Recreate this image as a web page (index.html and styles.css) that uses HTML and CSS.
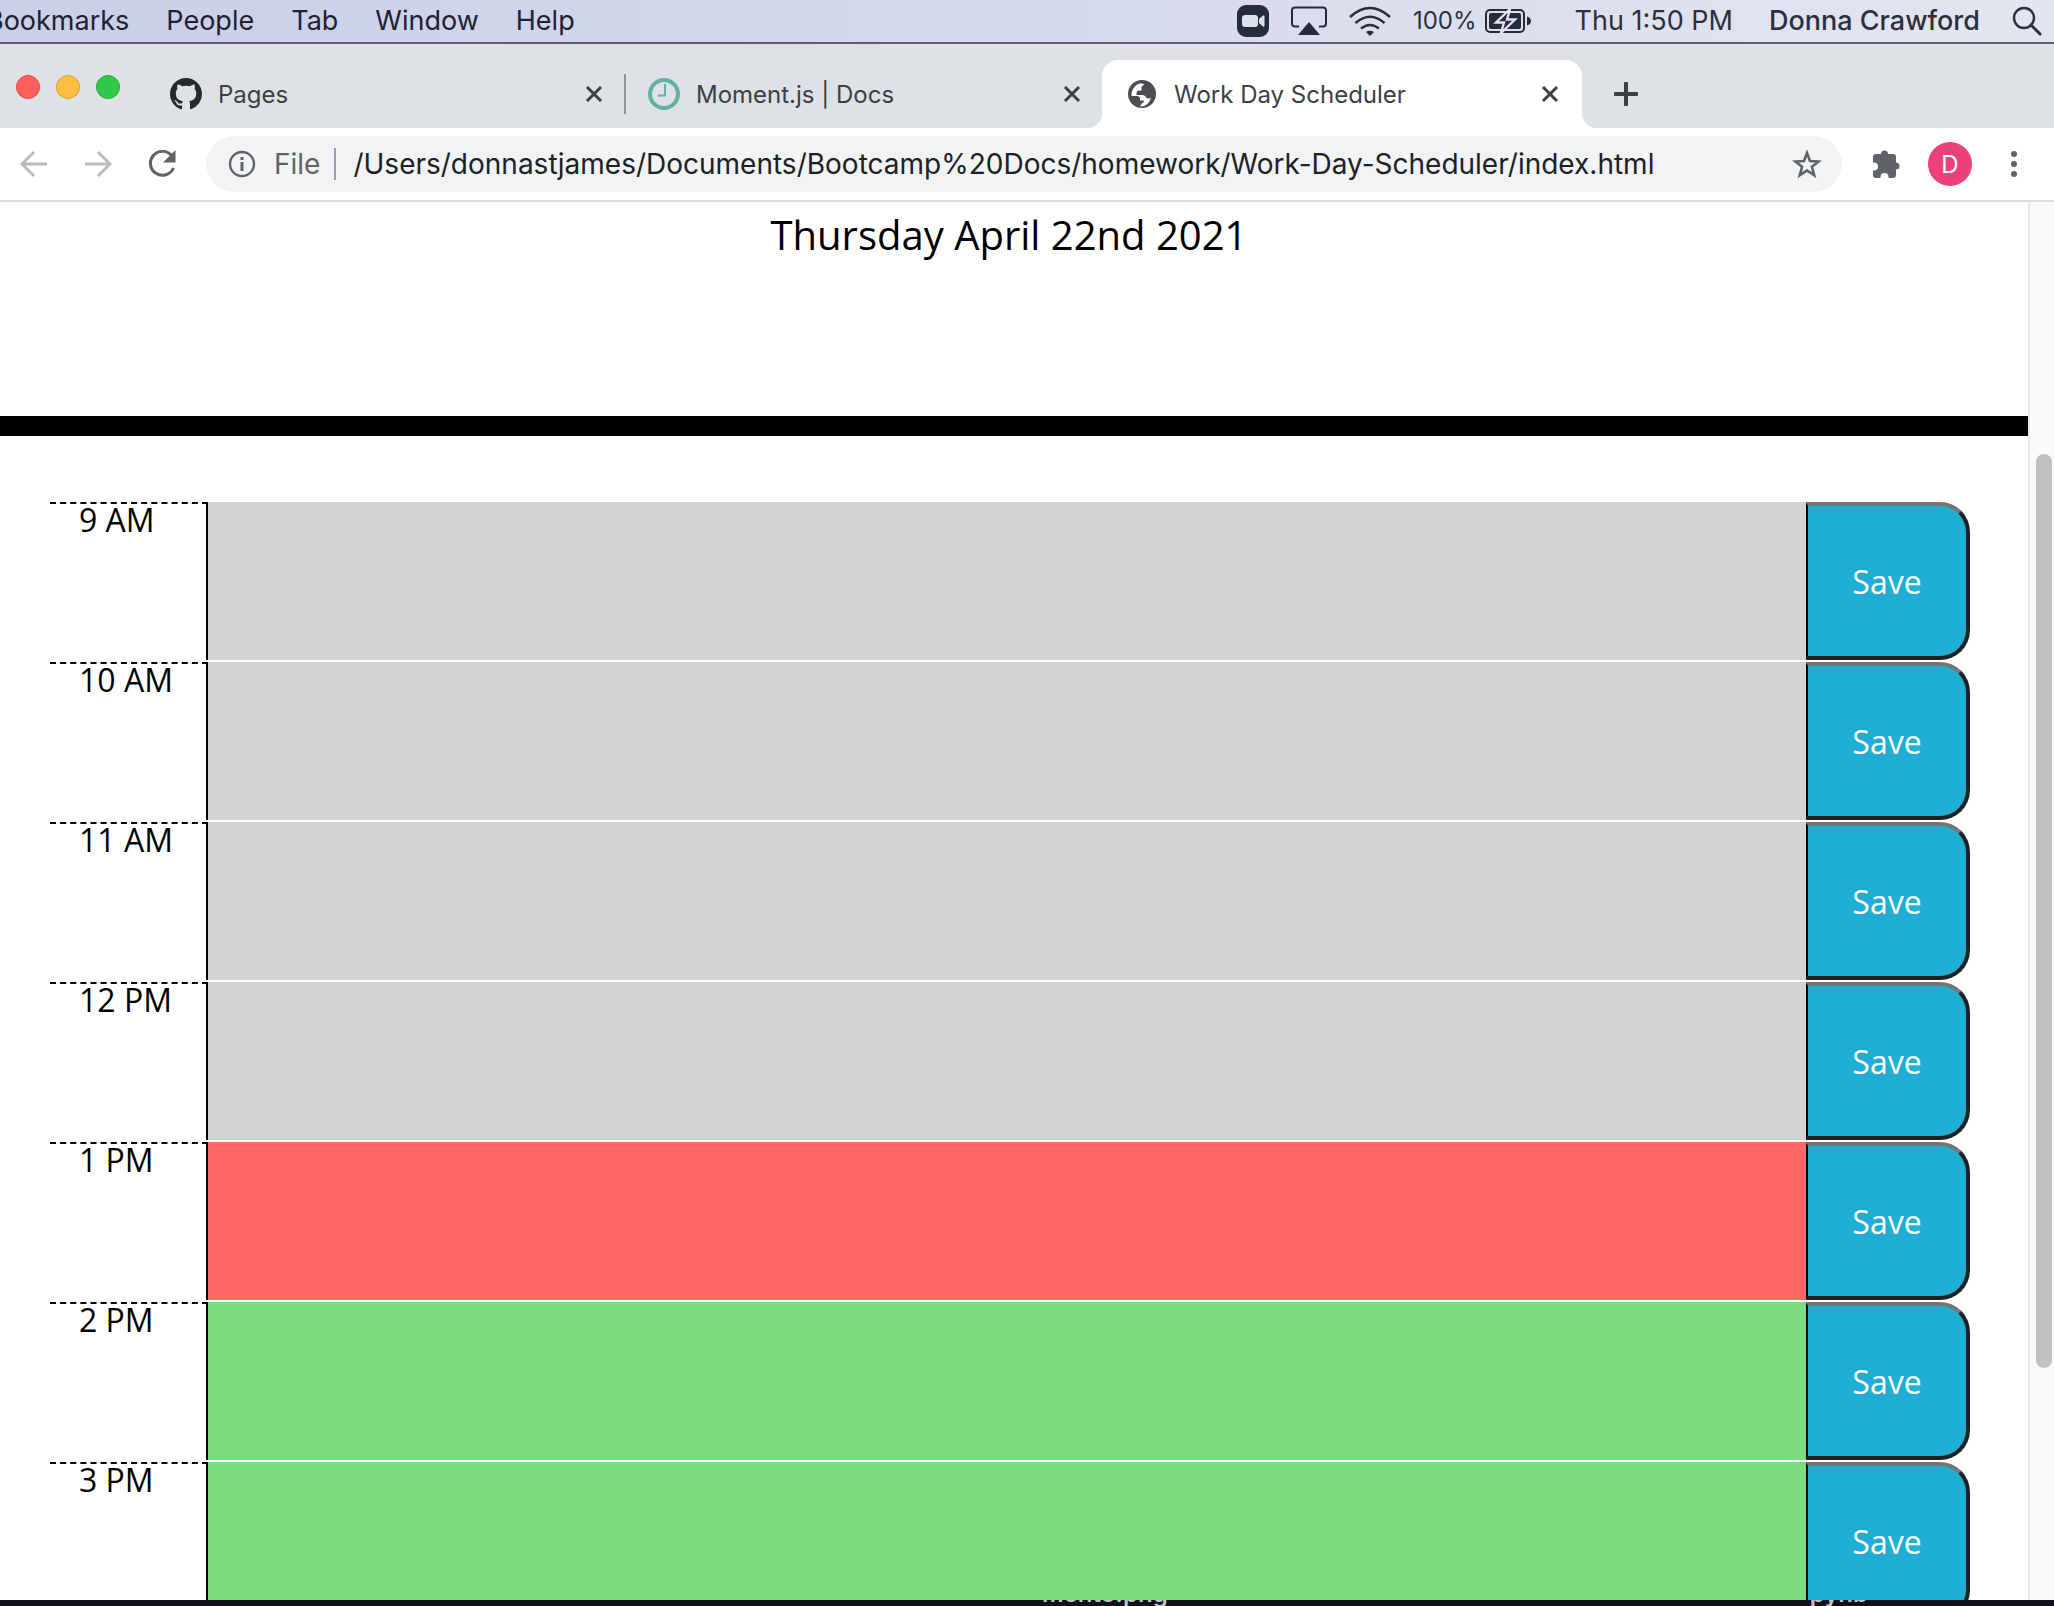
FILE: index.html
```html
<!DOCTYPE html>
<html lang="en">
<head>
<meta charset="utf-8">
<title>Work Day Scheduler</title>
<link rel="stylesheet" href="styles.css">
</head>
<body>
<header class="menubar">
  <nav class="menus">
    <button class="menu">Bookmarks</button>
    <button class="menu">People</button>
    <button class="menu">Tab</button>
    <button class="menu">Window</button>
    <button class="menu">Help</button>
  </nav>
  <div class="status">
    <svg width="32" height="32" viewBox="0 0 32 32" aria-hidden="true"><rect width="32" height="32" rx="9" fill="#262c3b"/><rect x="5" y="10" width="16" height="12" rx="3" fill="#dde2ef"/><path d="M22 14l4-3.500q1.500-.5 1.500 1v9q0 1.500-1.500 1L22 18z" fill="#dde2ef"/></svg>
    <svg width="36" height="30" viewBox="0 0 36 30" aria-hidden="true"><path d="M8 20.500H4q-3 0-3-3V4.500q0-3 3-3h28q3 0 3 3v13q0 3-3 3h-4" fill="none" stroke="#262c3b" stroke-width="2"/><path d="M18 16l11 13H7z" fill="#262c3b"/></svg>
    <svg width="42" height="30" viewBox="0 0 42 30" aria-hidden="true"><g fill="none" stroke="#262c3b" stroke-width="2.400"><path d="M1 11q20-18 40 0"/><path d="M6.500 17q14.500-12.500 29 0"/><path d="M12 22.500q9-7 18 0"/></g><path d="M17 26q4-2.500 8 0l-4 4z" fill="#262c3b"/></svg>
    <span class="battery"><span class="percent">100%</span>
    <svg width="46" height="26" viewBox="0 0 46 26" aria-hidden="true"><rect x="1" y="2" width="38" height="22" rx="4" fill="none" stroke="#262c3b" stroke-width="2"/><rect x="4" y="5" width="32" height="16" rx="2" fill="#262c3b"/><path d="M42 8.500q4 1 4 4.500t-4 4.500z" fill="#262c3b"/><path d="M25 1L11 14.500h8L16 25l14-13.500h-8z" fill="#262c3b" stroke="#dfe3f0" stroke-width="2.400"/></svg></span>
    <time class="clock">Thu 1:50 PM</time>
    <span class="account">Donna Crawford</span>
    <svg width="30" height="30" viewBox="0 0 30 30" aria-hidden="true"><circle cx="12" cy="12" r="10" fill="none" stroke="#2c303d" stroke-width="2.400"/><path d="M19 19l9 9" stroke="#2c303d" stroke-width="3" stroke-linecap="round"/></svg>
  </div>
</header>

<div class="tabstrip">
  <div class="lights"><i class="light red"></i><i class="light amber"></i><i class="light green"></i></div>
  <div class="tab">
    <svg width="32" height="32" viewBox="0 0 16 16" aria-hidden="true"><path fill="#24292e" d="M8 0C3.580 0 0 3.580 0 8c0 3.540 2.290 6.530 5.470 7.590.4.070.55-.17.55-.38 0-.19-.01-.82-.01-1.490-2.010.37-2.530-.49-2.690-.94-.09-.23-.48-.94-.82-1.130-.28-.15-.68-.52-.01-.53.63-.01 1.080.58 1.230.82.72 1.210 1.870.87 2.330.66.07-.52.28-.87.51-1.070-1.780-.2-3.640-.89-3.640-3.950 0-.87.31-1.590.82-2.150-.08-.2-.36-1.020.08-2.120 0 0 .67-.21 2.200.82.64-.18 1.320-.27 2-.27s1.360.09 2 .27c1.530-1.040 2.200-.82 2.200-.82.44 1.100.16 1.920.08 2.120.51.56.82 1.270.82 2.150 0 3.070-1.870 3.750-3.650 3.950.29.25.54.73.54 1.480 0 1.070-.01 1.930-.01 2.200 0 .21.15.46.55.38A8.010 8.010 0 0 0 16 8c0-4.420-3.580-8-8-8z"/></svg>
    <span class="tab-title">Pages</span>
    <button class="close" aria-label="Close tab"><svg width="18" height="18" viewBox="0 0 18 18"><path d="M2 2l14 14M16 2L2 16" stroke="#3c4043" stroke-width="3"/></svg></button>
  </div>
  <div class="tab divided">
    <svg width="32" height="32" viewBox="0 0 32 32" aria-hidden="true"><circle cx="16" cy="16" r="14" fill="none" stroke="#62b1a6" stroke-width="4"/><path d="M17 6v11.500h-7" fill="none" stroke="#62b1a6" stroke-width="2"/></svg>
    <span class="tab-title">Moment.js | Docs</span>
    <button class="close" aria-label="Close tab"><svg width="18" height="18" viewBox="0 0 18 18"><path d="M2 2l14 14M16 2L2 16" stroke="#3c4043" stroke-width="3"/></svg></button>
  </div>
  <div class="tab active">
    <svg width="32" height="32" viewBox="0 0 32 32" aria-hidden="true"><circle cx="16" cy="16" r="14" fill="#4a4e54"/><path d="M15 5q-5 1-8 6-2 4-1.500 7h5.500q3 0 3 2.500v2h4q0 2.500-2.500 3l-1.500 3q9 0 11-9-2 1.500-4.500.5-1-2.500-3.500-3h-6.500q-.5-3.500 2-4.500h3V9.500q0-2 3-2.500-2-2-4-2z" fill="#fff"/></svg>
    <span class="tab-title">Work Day Scheduler</span>
    <button class="close" aria-label="Close tab"><svg width="18" height="18" viewBox="0 0 18 18"><path d="M2 2l14 14M16 2L2 16" stroke="#3c4043" stroke-width="3"/></svg></button>
  </div>
  <button class="new-tab" aria-label="New tab"><svg width="24" height="24" viewBox="0 0 24 24"><path d="M12 1.500v21M1.500 12h21" stroke="#3c4043" stroke-width="4" stroke-linecap="round"/></svg></button>
</div>

<div class="toolbar">
  <div class="nav-buttons">
    <button aria-label="Back"><svg width="28" height="28" viewBox="0 0 28 28"><path d="M27 14H3M14 2L2 14l12 12" fill="none" stroke="#b9bbbe" stroke-width="3"/></svg></button>
    <button aria-label="Forward"><svg width="28" height="28" viewBox="0 0 28 28"><path d="M1 14h24M14 2l12 12-12 12" fill="none" stroke="#b9bbbe" stroke-width="3"/></svg></button>
    <button aria-label="Reload"><svg width="28" height="28" viewBox="0 0 28 28"><path d="M24 6A12 12 0 1 0 25.500 18" fill="none" stroke="#5f6368" stroke-width="3"/><path d="M27.500 0v12.500H15z" fill="#5f6368"/></svg></button>
  </div>
  <div class="omnibox">
    <svg width="28" height="28" viewBox="0 0 28 28" aria-hidden="true"><circle cx="14" cy="14" r="12" fill="none" stroke="#5f6368" stroke-width="2.400"/><path d="M12.500 7h3v3h-3zM12.500 12h3v9h-3z" fill="#5f6368"/></svg>
    <label class="scheme" for="url">File</label>
    <input class="url" id="url" type="text" value="/Users/donnastjames/Documents/Bootcamp%20Docs/homework/Work-Day-Scheduler/index.html">
    <button aria-label="Bookmark this page"><svg width="30" height="30" viewBox="0 0 30 30"><path d="M15 4l3 8 8.500.5-6.600 5.300 2.300 8.400L15 21.500l-7.200 4.700 2.300-8.400L3.500 12.500 12 12z" fill="none" stroke="#5f6368" stroke-width="2.600"/></svg></button>
  </div>
  <button class="extensions" aria-label="Extensions"><svg width="30" height="30" viewBox="0 0 30 30"><path fill="#5f6368" d="M9 5a3.500 3.500 0 0 1 7 0h5q3 0 3 3v5.500a3.500 3.500 0 0 1 0 7V26q0 3-3 3h-4.500v-1a4 4 0 0 0-8 0v1H4q-3 0-3-3v-4.500h1a4 4 0 0 0 0-8H1V8q0-3 3-3z"/></svg></button>
  <button class="avatar">D</button>
  <button class="more" aria-label="More"><svg width="8" height="28" viewBox="0 0 8 28"><g fill="#5f6368"><circle cx="4" cy="4" r="3"/><circle cx="4" cy="14" r="3"/><circle cx="4" cy="24" r="3"/></g></svg></button>
</div>

<div class="viewport">
  <main class="page">
    <div class="jumbotron"><p class="today">Thursday April 22nd 2021</p></div>
    <div class="schedule">
      <div class="row"><label class="hour" for="h9">9 AM</label><textarea class="slot past" id="h9"></textarea><button class="save">Save</button></div>
      <div class="row"><label class="hour" for="h10">10 AM</label><textarea class="slot past" id="h10"></textarea><button class="save">Save</button></div>
      <div class="row"><label class="hour" for="h11">11 AM</label><textarea class="slot past" id="h11"></textarea><button class="save">Save</button></div>
      <div class="row"><label class="hour" for="h12">12 PM</label><textarea class="slot past" id="h12"></textarea><button class="save">Save</button></div>
      <div class="row"><label class="hour" for="h13">1 PM</label><textarea class="slot present" id="h13"></textarea><button class="save">Save</button></div>
      <div class="row"><label class="hour" for="h14">2 PM</label><textarea class="slot future" id="h14"></textarea><button class="save">Save</button></div>
      <div class="row"><label class="hour" for="h15">3 PM</label><textarea class="slot future" id="h15"></textarea><button class="save">Save</button></div>
    </div>
  </main>
  <div class="scrollbar"><div class="thumb"></div></div>
</div>
<footer class="desktop"><span class="file">mento.png</span><span class="file">pynb</span></footer>
</body>
</html>
```
FILE: styles.css
```css
* { box-sizing: border-box; }

body {
  margin: 0;
  height: 100vh;
  display: flex;
  flex-direction: column;
  overflow: hidden;
  background: #fff;
  font-family: Inter, "Liberation Sans", sans-serif;
}

button { padding: 0; border: 0; background: none; font: inherit; color: inherit; }
svg { display: block; flex: none; }

/* System menu bar */
.menubar {
  flex: none;
  height: 44px;
  padding-right: 12px;
  display: flex;
  align-items: center;
  justify-content: space-between;
  border-bottom: 2px solid #595e7e;
  background: linear-gradient(90deg, #cacee6, #d5daec 50%, #e3e6f0);
  color: #1d2135;
  font-size: 27px;
  line-height: 40px;
  white-space: nowrap;
}
.menus { display: flex; gap: 37px; margin-left: -14px; }
.status { display: flex; align-items: center; gap: 22px; color: #2c303d; }
.battery { display: flex; align-items: center; gap: 8px; }
.percent { font-size: 24px; }
.clock { margin-left: 22px; }
.account { margin: 0 10px 0 14px; font-weight: 500; }

/* Tabs */
.tabstrip {
  flex: none;
  height: 84px;
  padding: 16px 0 0 12px;
  display: flex;
  background: #dee1e6;
  color: #3c4043;
  font-size: 24px;
}
.lights { display: flex; gap: 16px; width: 142px; padding: 15px 0 0 4px; }
.light { width: 24px; height: 24px; border-radius: 50%; }
.red { background: #fd605b; border: 1px solid #e24640; }
.amber { background: #fdbe41; border: 1px solid #dfa033; }
.green { background: #34c84a; border: 1px solid #26ab35; }
.tab { position: relative; width: 478px; padding: 0 29px 0 16px; display: flex; align-items: center; gap: 16px; }
.tab-title { flex: 1; }
.divided::before { content: ""; position: absolute; left: -8px; top: 14px; width: 2px; height: 40px; background: #919499; }
.active { width: 480px; margin-left: -8px; padding: 0 23px 0 24px; background: #fff; border-radius: 16px 16px 0 0; }
.active::before, .active::after { content: ""; position: absolute; bottom: 0; width: 16px; height: 16px; }
.active::before { left: -16px; background: radial-gradient(circle at 0 0, #dee1e6 16px, #fff 17px); }
.active::after { right: -16px; background: radial-gradient(circle at 100% 0, #dee1e6 16px, #fff 17px); }
.new-tab { margin-left: 32px; }

/* Address bar */
.toolbar {
  flex: none;
  height: 74px;
  padding: 0 36px 0 20px;
  display: flex;
  align-items: center;
  border-bottom: 2px solid #dcdbe0;
  font-size: 28px;
}
.nav-buttons { display: flex; gap: 36px; width: 186px; }
.omnibox { flex: 1; height: 56px; padding: 0 20px 0 22px; display: flex; align-items: center; border-radius: 28px; background: #f1f3f4; }
.scheme { margin-left: 18px; padding-right: 14px; border-right: 2px solid #9aa0a6; line-height: 32px; color: #5f6368; }
.url { flex: 1; min-width: 0; padding: 0 0 0 17px; border: 0; background: none; font: inherit; color: #202124; }
.extensions { margin-left: 30px; }
.avatar { width: 44px; height: 44px; margin: 0 38px 0 26px; border-radius: 50%; background: #ec407a; color: #fff; font-size: 24px; }

/* Page */
.viewport { flex: 1; min-height: 0; display: flex; font-family: "Open Sans", "Noto Sans", sans-serif; color: #000; }
.page { flex: 1; overflow: hidden; }
.jumbotron { height: 234px; border-bottom: 20px solid #000; text-align: center; }
.today { margin: 0; padding: 3px 10px 0 0; font-size: 40px; line-height: 60px; }
.schedule { padding: 66px 58px 0 50px; }
.row { display: grid; grid-template-columns: 158px 1fr 164px; height: 158px; margin-bottom: 2px; }
.hour { padding-left: 29px; border-top: 2px dashed #000; border-right: 2px solid #000; font-size: 32px; line-height: 32px; }
.slot { width: 100%; height: 100%; padding: 8px; border: 0; resize: none; font: inherit; font-size: 32px; }
.past { background: #d3d3d3; }
.present { background: #ff6a65; }
.future { background: #7ddc7f; }
.save {
  border: 4px solid;
  border-color: #767676 #212121 #212121 #000;
  border-left-width: 2px;
  border-radius: 0 30px 30px 0;
  background: #20aed4;
  color: #fff;
  font-size: 32px;
}
.scrollbar { width: 26px; padding: 252px 2px 0 6px; border-left: 2px solid #e8e8e8; background: #fafafa; }
.thumb { height: 914px; border-radius: 8px; background: #c1c1c1; }

/* Strip of desktop below the window */
.desktop { flex: none; height: 6px; padding: 0 186px 0 1042px; display: flex; justify-content: space-between; align-items: flex-end; overflow: hidden; background: #10111a; color: #c4c4c8; font-size: 24px; font-weight: 600; line-height: 24px; }
```
